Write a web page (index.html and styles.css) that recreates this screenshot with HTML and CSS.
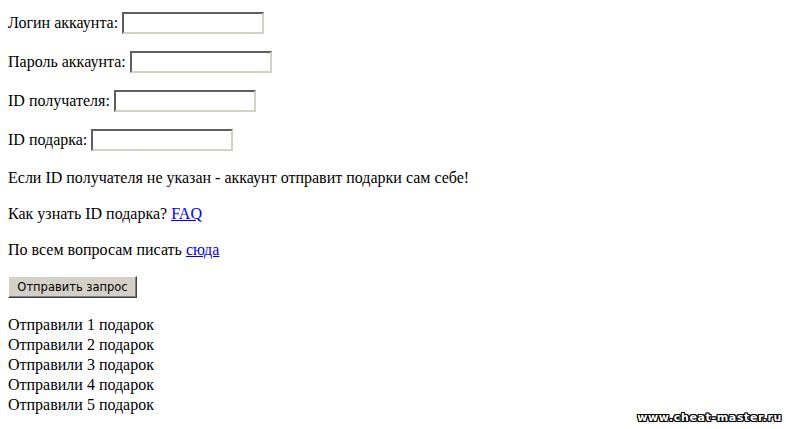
FILE: index.html
```html
<!DOCTYPE html>
<html lang="ru">
<head>
    <meta charset="UTF-8">
    <title>Отправка подарков</title>
    <link rel="stylesheet" href="styles.css">
</head>
<body>
    <form class="gift-form" action="#" method="post">
        <div class="field">
            <label>Логин аккаунта:</label><input type="text" name="login">
        </div>
        <div class="field">
            <label>Пароль аккаунта:</label><input type="password" name="password">
        </div>
        <div class="field">
            <label>ID получателя:</label><input type="text" name="receiver">
        </div>
        <div class="field">
            <label>ID подарка:</label><input type="text" name="gift">
        </div>

        <p class="note">Если ID получателя не указан - аккаунт отправит подарки сам себе!</p>
        <p class="note">Как узнать ID подарка? <a href="#">FAQ</a></p>
        <p class="note">По всем вопросам писать <a href="#">сюда</a></p>

        <button type="submit" class="btn">Отправить запрос</button>
    </form>

    <!-- Результат отправки -->
    <div class="log">
        <div>Отправили 1 подарок</div>
        <div>Отправили 2 подарок</div>
        <div>Отправили 3 подарок</div>
        <div>Отправили 4 подарок</div>
        <div>Отправили 5 подарок</div>
    </div>

    <div class="watermark">www.cheat-master.ru</div>
</body>
</html>
```

FILE: styles.css
```css
* {
    margin: 0;
    padding: 0;
    box-sizing: border-box;
}

html, body {
    height: 100%;
}

body {
    font-family: "Liberation Serif", "Times New Roman", serif;
    font-size: 16px;
    line-height: 20px;
    color: #000;
    background: #fff;
    padding: 12px 8px 0;
    position: relative;
}

a {
    color: #0000ee;
}

.field {
    display: flex;
    align-items: center;
    height: 22px;
    margin-bottom: 17px;
}

.field label {
    margin-right: 4px;
}

.field input {
    width: 142px;
    height: 22px;
    border: 2px solid;
    border-color: #5f5f5f #d4d0c8 #d4d0c8 #5f5f5f;
    background: #fff;
    font: 13px "Liberation Sans", sans-serif;
    padding: 0 2px;
}

.note {
    margin-top: 16px;
    margin-bottom: 16px;
}

.field + .note {
    margin-top: 6px;
}

.btn {
    display: block;
    width: 129px;
    height: 22px;
    margin-top: 14px;
    background: #d4d0c8;
    border: 1px solid;
    border-color: #fff #404040 #404040 #fff;
    box-shadow: inset -1px -1px 0 #808080;
    font-family: "DejaVu Sans", Tahoma, sans-serif;
    font-size: 11.5px;
    color: #000;
    line-height: 18px;
    cursor: pointer;
}

.log {
    margin-top: 17px;
}

.watermark {
    position: absolute;
    right: 4px;
    bottom: 4px;
    font-family: "DejaVu Sans", Verdana, sans-serif;
    font-weight: bold;
    font-size: 11px;
    line-height: 14px;
    letter-spacing: 0.65px;
    color: #fff;
    text-shadow: 1px 0 0 #000, -1px 0 0 #000, 0 1px 0 #000, 0 -1px 0 #000,
                 1px 1px 0 #000, -1px -1px 0 #000, 1px -1px 0 #000, -1px 1px 0 #000;
}
```
